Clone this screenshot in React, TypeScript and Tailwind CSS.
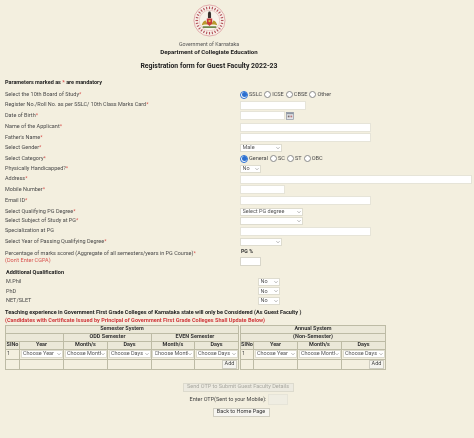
import React from "react";

const Req = () => <span className="text-[#d9534f]">*</span>;

function Label({ text, req = true }: { text: string; req?: boolean }) {
  return (
    <span className="whitespace-nowrap">
      {text}
      {req && <Req />}
    </span>
  );
}

function Row({ h, text, req = true, children }: { h: string; text: string; req?: boolean; children: React.ReactNode }) {
  return (
    <div className={`flex items-center ${h}`}>
      <div className="w-[235px] shrink-0">
        <Label text={text} req={req} />
      </div>
      <div className="flex items-center">{children}</div>
    </div>
  );
}

function Input({ w, h = "h-[9px]" }: { w: string; h?: string }) {
  return <input className={`${w} ${h} bg-white border border-[#e6e4d8] block`} />;
}

function Chevron() {
  return (
    <svg viewBox="0 0 6 4" className="absolute right-[2px] top-1/2 -translate-y-1/2 w-[4px] h-[3px] pointer-events-none">
      <path d="M0.6 0.8 3 3.2 5.4 0.8" fill="none" stroke="#777" strokeWidth="0.8" />
    </svg>
  );
}

function Sel({ w, text, h = "h-[8px]" }: { w: string; text: string; h?: string }) {
  return (
    <div className={`relative ${w} ${h}`}>
      <select className="appearance-none w-full h-full bg-white border border-[#dedccf] text-[5.5px] leading-none text-[#555] pl-[1.5px] pr-[5px] py-0 block">
        <option>{text}</option>
      </select>
      <Chevron />
    </div>
  );
}

function Radio({ label, checked = false }: { label: string; checked?: boolean }) {
  return (
    <span className="flex items-center mr-[2px]">
      <span
        className={
          checked
            ? "w-[8px] h-[8px] rounded-full border border-[#2a6fd0] bg-white flex items-center justify-center"
            : "w-[7px] h-[7px] rounded-full border border-[#8a8a8a] bg-white"
        }
      >
        {checked && <span className="w-[5px] h-[5px] rounded-full bg-[#2a6fd0]" />}
      </span>
      <span className="ml-[1px] text-[5.6px] mt-[1px]">{label}</span>
    </span>
  );
}

function Logo() {
  const dots = Array.from({ length: 28 }, (_, i) => (i * 360) / 28);
  return (
    <svg viewBox="0 0 34 34" className="w-[33px] h-[33px] mx-auto block">
      <circle cx="17" cy="17" r="16" fill="#f7f3ea" stroke="#d98a8f" strokeWidth="0.7" />
      <circle cx="17" cy="17" r="10.6" fill="#f7f3ea" stroke="#dfa0a2" strokeWidth="0.5" />
      {dots.map((a) => (
        <rect key={a} x="16.4" y="2.6" width="1.2" height="2.6" fill="#b5535c" transform={`rotate(${a} 17 17)`} />
      ))}
      <path d="M9 22c1-4 3-5 4-5l1 2h6l1-2c1 0 3 1 4 5l-3-1h-10z" fill="#b99a2e" />
      <path d="M14.2 15h5.6v5l-2.8 2.6-2.8-2.6z" fill="#c93a3a" />
      <rect x="15.4" y="9.5" width="3.2" height="5" fill="#3a3330" />
      <circle cx="17" cy="9.2" r="1.4" fill="#2f2a28" />
      <path d="M10 23h14v1.6H10z" fill="#5c7a35" />
      <circle cx="17" cy="17.6" r="1.2" fill="#e6c53d" />
    </svg>
  );
}

const cell = "border border-[#bdbba5] p-0 text-center overflow-hidden";
const head = `${cell} bg-[#ebe8d8] font-bold text-[#333] text-[5.5px] leading-none`;

function Choice({ text }: { text: string }) {
  return (
    <div className="mx-auto w-[42px]">
      <Sel w="w-[42px]" text={text} />
    </div>
  );
}

function AddBtn() {
  return (
    <button className="h-[9px] w-[15px] bg-[#f5f4ef] border border-[#cfcdc0] text-[5.5px] leading-none text-[#444] ml-auto mr-[1px] block p-0">
      Add
    </button>
  );
}

export default function App() {
  return (
    <div className="w-[474px] h-[438px] overflow-hidden bg-[#f3efdf] text-[5.5px] leading-none text-[#4a4a4a] font-['Roboto',sans-serif] blur-[0.4px]">
      <div className="w-[418px] pt-[4px] text-center">
        <Logo />
        <div className="mt-[5px] h-[7px] text-[#555] text-[5.3px]">Government of Karnataka</div>
        <div className="h-[8px] font-bold text-[#222] text-[6.1px]">Department of Collegiate Education</div>
        <div className="mt-[6px] h-[9px] font-bold text-[#222] text-[6.9px]">Registration form for Guest Faculty 2022-23</div>
      </div>

      <div className="pl-[5px] pt-[6px]">
        <div className="h-[9px] font-bold text-[#222] flex items-center">
          <span>
            Parameters marked as <Req /> are mandatory
          </span>
        </div>
        <Row h="h-[11px] mt-[2px]" text="Select the 10th Board of Study">
          <Radio label="SSLC" checked />
          <Radio label="ICSE" />
          <Radio label="CBSE" />
          <Radio label="Other" />
        </Row>
        <Row h="h-[10px]" text="Register No./Roll No. as per SSLC/ 10th Class Marks Card">
          <Input w="w-[66px]" />
        </Row>
        <Row h="h-[11px]" text="Date of Birth">
          <Input w="w-[45px]" />
          <svg viewBox="0 0 9 9" className="w-[8px] h-[8px] ml-[1px]">
            <rect x="0.5" y="0.5" width="8" height="8" fill="#e4e6ea" stroke="#8f97a3" strokeWidth="0.8" />
            <rect x="0.5" y="0.5" width="8" height="2" fill="#8f97a3" />
            <rect x="2" y="4" width="2" height="2" fill="#7a6a6a" />
            <rect x="5" y="4" width="2" height="2" fill="#b77" />
          </svg>
        </Row>
        <Row h="h-[12px]" text="Name of the Applicant">
          <Input w="w-[131px]" />
        </Row>
        <Row h="h-[9px]" text="Father's Name">
          <Input w="w-[131px]" />
        </Row>
        <Row h="h-[11px]" text="Select Gender">
          <Sel w="w-[42px]" text="Male" />
        </Row>
        <Row h="h-[11px]" text="Select Category">
          <Radio label="General" checked />
          <Radio label="SC" />
          <Radio label="ST" />
          <Radio label="OBC" />
        </Row>
        <Row h="h-[10px]" text="Physically Handicapped?">
          <Sel w="w-[21px]" text="No" />
        </Row>
        <Row h="h-[10px]" text="Address">
          <Input w="w-[232px]" />
        </Row>
        <Row h="h-[11px]" text="Mobile Number">
          <Input w="w-[45px]" />
        </Row>
        <Row h="h-[11px]" text="Email ID">
          <Input w="w-[131px]" />
        </Row>
        <Row h="h-[11px]" text="Select Qualifying PG Degree">
          <Sel w="w-[63px]" text="Select PG degree" />
        </Row>
        <Row h="h-[8px]" text="Select Subject of Study at PG">
          <Sel w="w-[63px]" text="" />
        </Row>
        <Row h="h-[12px]" text="Specialization at PG" req={false}>
          <Input w="w-[131px]" />
        </Row>
        <Row h="h-[9px]" text="Select Year of Passing Qualifying Degree">
          <Sel w="w-[42px]" text="" />
        </Row>

        <div className="flex h-[20px] mt-[1px]">
          <div className="w-[235px] shrink-0 pt-[3px]">
            <div className="h-[7px] flex items-center">
              <Label text="Percentage of marks scored (Aggregate of all semesters/years in PG Course)" />
            </div>
            <div className="text-[#d9534f] h-[7px] flex items-center">(Don't Enter CGPA)</div>
          </div>
          <div className="pt-[2px]">
            <div className="h-[6px] font-bold text-[#333] text-[5.2px] leading-none pl-[1px]">PG %</div>
            <input className="w-[21px] h-[9px] mt-[2px] bg-white border border-[#d8d6ca] block" />
          </div>
        </div>

        <div className="h-[9px] mt-[1px] pl-[1px] font-bold text-[#222] flex items-center">Additional Qualification</div>
        {["M.Phil", "PhD", "NET/SLET"].map((q) => (
          <div key={q} className="flex items-center h-[9.5px]">
            <div className="w-[253px] shrink-0 pl-[1px]">{q}</div>
            <Sel w="w-[22px]" text="No" />
          </div>
        ))}

        <div className="mt-[3px] h-[8px] font-bold text-[5.55px] text-[#222] flex items-center whitespace-nowrap">
          Teaching experience in Government First Grade Colleges of Karnataka state will only be Considered (As Guest Faculty )
        </div>
        <div className="h-[8px] font-bold text-[5.55px] text-[#d0383c] flex items-center whitespace-nowrap">
          (Candidates with Certificate Issued by Principal of Government First Grade Colleges Shall Update Below)
        </div>

        <div className="flex items-start">
          <table className="table-fixed border-collapse w-[233px] shrink-0">
            <colgroup>
              <col className="w-[14px]" />
              <col className="w-[44px]" />
              <col className="w-[44px]" />
              <col className="w-[44px]" />
              <col className="w-[43px]" />
              <col className="w-[44px]" />
            </colgroup>
            <tbody>
              <tr className="h-[8px]">
                <td colSpan={6} className={`${head} text-[#2b2b8f]`}>Semester System</td>
              </tr>
              <tr className="h-[8px]">
                <td colSpan={2} className={head}></td>
                <td colSpan={2} className={head}>ODD Semester</td>
                <td colSpan={2} className={head}>EVEN Semester</td>
              </tr>
              <tr className="h-[8px]">
                {["SlNo", "Year", "Month/s", "Days", "Month/s", "Days"].map((t, i) => (
                  <td key={i} className={head}>{t}</td>
                ))}
              </tr>
              <tr className="h-[10px]">
                <td className={`${cell} text-left pl-[1px]`}>1</td>
                <td className={cell}><Choice text="Choose Year" /></td>
                <td className={cell}><Choice text="Choose Month" /></td>
                <td className={cell}><Choice text="Choose Days" /></td>
                <td className={cell}><Choice text="Choose Month" /></td>
                <td className={cell}><Choice text="Choose Days" /></td>
              </tr>
              <tr className="h-[10px]">
                <td className={cell}></td>
                <td className={cell}></td>
                <td className={cell}></td>
                <td className={cell}></td>
                <td className={cell}></td>
                <td className={cell}><AddBtn /></td>
              </tr>
            </tbody>
          </table>

          <table className="table-fixed border-collapse w-[145px] ml-[1px] shrink-0">
            <colgroup>
              <col className="w-[13px]" />
              <col className="w-[44px]" />
              <col className="w-[44px]" />
              <col className="w-[44px]" />
            </colgroup>
            <tbody>
              <tr className="h-[8px]">
                <td colSpan={4} className={`${head} text-[#2b2b8f]`}>Annual System</td>
              </tr>
              <tr className="h-[8px]">
                <td colSpan={4} className={head}>(Non-Semester)</td>
              </tr>
              <tr className="h-[8px]">
                {["SlNo", "Year", "Month/s", "Days"].map((t, i) => (
                  <td key={i} className={head}>{t}</td>
                ))}
              </tr>
              <tr className="h-[10px]">
                <td className={`${cell} text-left pl-[1px]`}>1</td>
                <td className={cell}><Choice text="Choose Year" /></td>
                <td className={cell}><Choice text="Choose Month" /></td>
                <td className={cell}><Choice text="Choose Days" /></td>
              </tr>
              <tr className="h-[10px]">
                <td className={cell}></td>
                <td className={cell}></td>
                <td className={cell}></td>
                <td className={cell}><AddBtn /></td>
              </tr>
            </tbody>
          </table>
        </div>
      </div>

      <div className="flex flex-col items-center mt-[13px] pl-[2px]">
        <button className="h-[9px] w-[111px] bg-[#eceae0] border border-[#dcdacd] text-[5.5px] leading-none text-[#aaa9a0] whitespace-nowrap p-0">
          Send OTP to Submit Guest Faculty Details
        </button>
        <div className="flex items-center mt-[2px] h-[12px] text-[#444] ml-[2px]">
          <span>Enter OTP(Sent to your Mobile):</span>
          <input className="w-[20px] h-[11px] ml-[2px] bg-[#efede2] border border-[#e6e4d8] block" />
        </div>
        <button className="h-[9px] w-[57px] mt-[2px] ml-[6px] bg-[#f6f5f0] border border-[#cfcdc0] text-[5.5px] leading-none text-[#333] whitespace-nowrap p-0">
          Back to Home Page
        </button>
      </div>
    </div>
  );
}
